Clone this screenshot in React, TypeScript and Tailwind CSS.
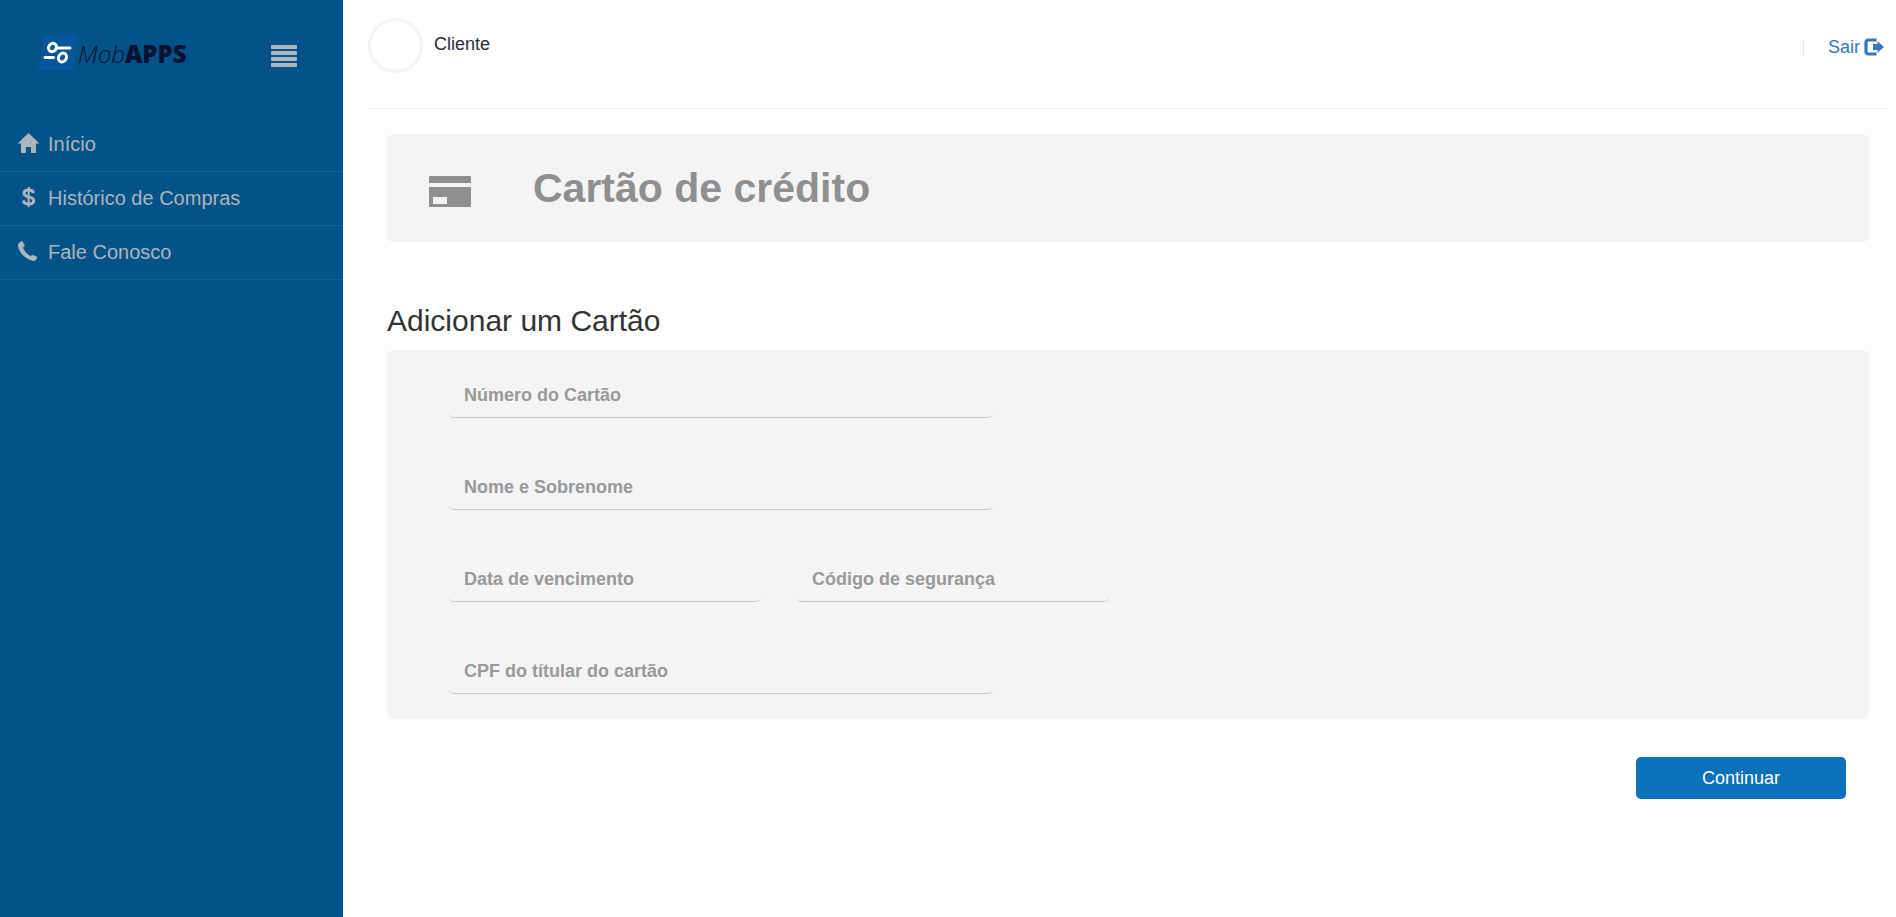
import type { ReactNode } from "react";

const navItems: { label: string; icon: ReactNode }[] = [
  {
    label: "Início",
    icon: (
      <svg viewBox="0 0 22 20" className="h-5 w-[22px]" fill="currentColor">
        <path d="M10.500 0 21.500 10.500H18V20h-5v-6H8v6H3v-9.500H-.5L10.500 0Z" />
      </svg>
    ),
  },
  {
    label: "Histórico de Compras",
    icon: (
      <svg
        viewBox="0 0 22 20"
        className="h-5 w-[22px]"
        fill="none"
        stroke="currentColor"
        strokeWidth="3"
      >
        <path d="M15.500 6C15.200 3.800 13.500 3 10.700 3S6 4 6 6.200s1.600 2.900 4.700 3.700 5 1.600 5 3.800-2 3.300-5 3.300-5-1.200-5.200-3.600" />
        <path d="M10.700 0v20" strokeWidth="2" />
      </svg>
    ),
  },
  {
    label: "Fale Conosco",
    icon: (
      <svg viewBox="0 0 22 20" className="h-5 w-[22px]" fill="currentColor">
        <path d="M1 1.800 3.300.2q.9-.5 1.500.4L6.500 4q.4.9-.3 1.500L5 6.700c1.500 3.400 4.200 6.400 7.500 8.400l1.500-.9q.7-.4 1.400 0l3.300 1.400q.9.600.4 1.400l-1.300 2.100q-.5.800-1.500.8C8.500 19.300 0 11.500 0 4q0-1.500 1-2.200Z" />
      </svg>
    ),
  },
];

function Logo() {
  return (
    <a href="#" aria-label="MobAPPS" className="flex items-center text-[#06122e]">
      <svg viewBox="0 0 40 34" className="h-[34px] w-10" fill="none">
        <path d="M6 0h34l-5 34H0L6 0Z" fill="#07559a" />
        <g stroke="#fff" strokeWidth="3">
          <ellipse cx="14.500" cy="11.500" rx="3.800" ry="4.300" transform="rotate(35 14.500 11.500)" />
          <ellipse cx="24.500" cy="21.500" rx="3.800" ry="4.600" transform="rotate(30 24.500 21.500)" />
          <path d="M19 12h13M7 21.500h8.500" strokeLinecap="round" />
        </g>
      </svg>
      <span className="pt-[2px] font-['Open_Sans',sans-serif] text-[24px] leading-8 font-light italic">
        Mob
      </span>
      <span className="pt-[2px] font-['Open_Sans',sans-serif] text-[24px] leading-8 font-extrabold">
        APPS
      </span>
    </a>
  );
}

function Sidebar() {
  return (
    <aside className="w-[343px] shrink-0 bg-[#035388] text-[#aeb4bc]">
      <div className="flex h-[118px] items-start justify-between pt-9 pr-[46px] pl-[38px]">
        <Logo />
        <button type="button" aria-label="Menu" className="mt-[9px] flex w-[26px] flex-col gap-[2px]">
          <span className="h-[4px] w-full rounded-[1px] bg-current" />
          <span className="h-[4px] w-full rounded-[1px] bg-current" />
          <span className="h-[4px] w-full rounded-[1px] bg-current" />
          <span className="h-[4px] w-full rounded-[1px] bg-current" />
        </button>
      </div>
      <nav>
        {navItems.map((item) => (
          <a
            key={item.label}
            href="#"
            className="flex h-[54px] items-center gap-2 border-b border-[#125f92] pb-px pl-[18px] text-[20px]"
          >
            <span className="pb-[2px]">{item.icon}</span>
            {item.label}
          </a>
        ))}
      </nav>
    </aside>
  );
}

// The label sits over the empty input and goes away once something is typed
function Field({ id, label, width }: { id: string; label: string; width: string }) {
  return (
    <div className={`relative ${width}`}>
      <input
        id={id}
        type="text"
        placeholder=" "
        className="peer block h-[46px] w-full rounded-[5px] border-b border-[#c8c8c8] px-[15px] text-[18px] font-bold outline-none"
      />
      <label
        htmlFor={id}
        className="absolute top-[10px] left-[15px] cursor-text text-[18px] leading-[27px] font-bold text-[#999] peer-[:not(:placeholder-shown)]:hidden"
      >
        {label}
      </label>
    </div>
  );
}

export default function App() {
  return (
    <div className="flex min-h-screen bg-[#fdfdfd] font-['Liberation_Sans',Arial,sans-serif]">
      <Sidebar />
      <main className="min-w-0 flex-1 pr-2 pl-[25px]">
        <header className="flex h-[109px] items-start justify-between border-b border-[#ebebeb] pt-[18px]">
          <div className="flex text-[18px] text-[#2b2d3a]">
            <span className="size-[55px] rounded-full border-3 border-[#f3f3f3]" />
            <span className="mt-[13px] ml-[11px]">Cliente</span>
          </div>
          <div className="mt-4 flex items-center pr-1">
            <span className="mr-6 h-4 border-l border-[#e7e7e7]" />
            <a href="#" className="flex items-center gap-1 text-[18px] text-[#337ab7]">
              Sair
              <svg viewBox="0 0 20 18" className="mb-[2px] h-[18px] w-5" fill="none">
                <path
                  d="M12.500 2H4.500Q2 2 2 4.500v9Q2 16 4.500 16h8"
                  stroke="currentColor"
                  strokeWidth="3.200"
                />
                <path d="M9 6h4.500V3.200L20 9l-6.500 5.800V12H9V6Z" fill="currentColor" />
              </svg>
            </a>
          </div>
        </header>

        <div className="pt-[25px] pr-[19px] pl-[19px]">
          <div className="flex h-[108px] items-center rounded-[6px] bg-[#f4f4f4] pl-[42px] text-[#8f8f8f]">
            <svg viewBox="0 0 42 31" className="mt-[6px] h-[31px] w-[42px]" fill="currentColor">
              <path d="M1 0h40q1 0 1 1v6H0V1q0-1 1-1Z" />
              <path
                fillRule="evenodd"
                d="M0 11h42v19q0 1-1 1H1q-1 0-1-1V11Zm4 10v7h14v-7H4Z"
              />
            </svg>
            <h1 className="ml-[62px] text-[41px] leading-[46px] font-bold">Cartão de crédito</h1>
          </div>

          <h2 className="mt-[62px] mb-3 text-[30px] leading-[34px] text-[#333]">
            Adicionar um Cartão
          </h2>
          <form>
            <div className="flex flex-col gap-[46px] rounded-[6px] bg-[#f4f4f4] pt-[22px] pb-[25px] pl-[62px]">
              <Field id="numero" label="Número do Cartão" width="w-[544px]" />
              <Field id="nome" label="Nome e Sobrenome" width="w-[544px]" />
              <div className="flex gap-9">
                <Field id="vencimento" label="Data de vencimento" width="w-[312px]" />
                <Field id="codigo" label="Código de segurança" width="w-[312px]" />
              </div>
              <Field id="cpf" label="CPF do títular do cartão" width="w-[544px]" />
            </div>
            <div className="mt-[38px] flex justify-end pr-[23px]">
              <button
                type="submit"
                className="h-[42px] w-[210px] rounded-[5px] bg-[#0a71bb] text-[18px] text-white"
              >
                Continuar
              </button>
            </div>
          </form>
        </div>
      </main>
    </div>
  );
}
